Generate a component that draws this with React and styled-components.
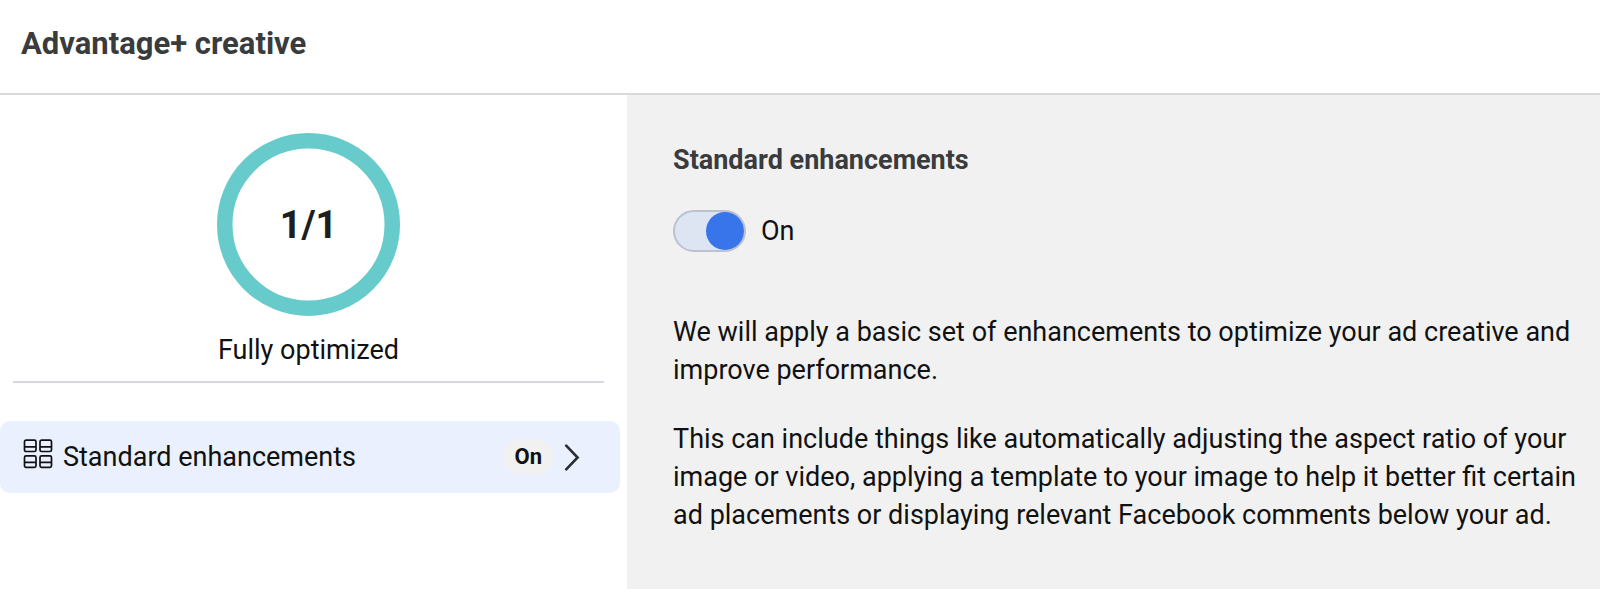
import React, { useState } from 'react'
import styled, { createGlobalStyle } from 'styled-components'

function App() {
    const [enabled, setEnabled] = useState(true)
    const status = enabled ? 'On' : 'Off'

    return (
        <>
            <GlobalStyle />
            <Page>
                <Header>
                    <Title>Advantage+ creative</Title>
                </Header>
                <Columns>
                    <Sidebar>
                        <Summary>
                            <Ring>
                                <ScoreRing />
                                <Score>{enabled ? '1/1' : '0/1'}</Score>
                            </Ring>
                            <SummaryLabel>Fully optimized</SummaryLabel>
                        </Summary>
                        <Item type='button'>
                            <GridIcon />
                            <ItemLabel>Standard enhancements</ItemLabel>
                            <Badge>{status}</Badge>
                            <ChevronIcon />
                        </Item>
                    </Sidebar>
                    <Details>
                        <DetailsTitle>Standard enhancements</DetailsTitle>
                        <ToggleRow>
                            <Toggle
                                id='enhancements'
                                type='checkbox'
                                role='switch'
                                checked={enabled}
                                onChange={(e) => setEnabled(e.target.checked)}
                            />
                            <label htmlFor='enhancements'>{status}</label>
                        </ToggleRow>
                        <Description>
                            <p>
                                We will apply a basic set of enhancements to optimize your ad creative and improve
                                performance.
                            </p>
                            <p>
                                This can include things like automatically adjusting the aspect ratio of your image or
                                video, applying a template to your image to help it better fit certain ad placements or
                                displaying relevant Facebook comments below your ad.
                            </p>
                        </Description>
                    </Details>
                </Columns>
            </Page>
        </>
    )
}

function ScoreRing() {
    return (
        <svg width='183' height='183' viewBox='0 0 183 183' fill='none' aria-hidden='true'>
            <circle cx='91.5' cy='91.5' r='83.75' stroke='#67cbcb' strokeWidth='15.5' />
        </svg>
    )
}

function GridIcon() {
    return (
        <svg width='30' height='36' viewBox='0 0 30 36' fill='none' stroke='#111' strokeWidth='1.7' aria-hidden='true'>
            <rect x='1.5' y='1.2' width='11.5' height='11.3' rx='1.6' />
            <rect x='17' y='1.2' width='11.5' height='11.3' rx='1.6' />
            <rect x='1.5' y='16.8' width='11.5' height='11.5' rx='1.6' />
            <rect x='17' y='16.8' width='11.5' height='11.5' rx='1.6' />
            <path d='M1.5 7.8h11.5M17 7.8h11.5M1.5 23.3h11.5M17 23.3h11.5' />
        </svg>
    )
}

function ChevronIcon() {
    return (
        <svg width='16' height='28' viewBox='0 0 16 28' fill='none' stroke='#2b2d30' strokeWidth='2.6' aria-hidden='true'>
            <path d='M2.2 2.7 13.6 14.5 2.2 26.3' strokeLinecap='round' />
        </svg>
    )
}

export default App

const GlobalStyle = createGlobalStyle`
    * {
        box-sizing: border-box;
    }

    body {
        margin: 0;
        background: #fff;
        color: #111;
        font-family: Roboto, 'Liberation Sans', sans-serif;
        font-size: 27px;
        line-height: 38px;
    }

    h1, h2, p {
        margin: 0;
    }
`

const Page = styled.main`
    display: flex;
    flex-direction: column;
    min-height: 100vh;
`

const Header = styled.header`
    padding: 25px 21px 30px;
    border-bottom: 2px solid #d9d9d9;
`

const Title = styled.h1`
    color: #3a3b3c;
    font-size: 31px;
    font-weight: 700;
    line-height: 38px;
`

const Columns = styled.div`
    display: grid;
    grid-template-columns: minmax(0, 29fr) minmax(0, 45fr);
    flex: 1;
`

const Sidebar = styled.div`
    display: flex;
    flex-direction: column;
    gap: 38px;
    padding: 38px 7px 38px 0;
`

const Summary = styled.section`
    display: flex;
    flex-direction: column;
    align-items: center;
    gap: 15px;
    margin: 0 16px 0 13px;
    padding-bottom: 12px;
    border-bottom: 2px solid #d8d8df;
`

const Ring = styled.div`
    display: grid;
    place-items: center;

    > * {
        grid-area: 1 / 1;
    }
`

const Score = styled.strong`
    color: #1c1e21;
    font-size: 38px;
    font-weight: 700;
`

const SummaryLabel = styled.p`
    color: #111;
`

const Item = styled.button`
    display: flex;
    align-items: center;
    gap: 10px;
    height: 72px;
    padding: 0 40px 0 23px;
    border: none;
    border-radius: 10px;
    background: #eaf0fd;
    color: #111;
    font: inherit;
    text-align: left;
    cursor: pointer;
`

const ItemLabel = styled.span`
    flex: 1;
`

const Badge = styled.span`
    padding: 0 12px;
    border-radius: 17px;
    background: #f1f1f1;
    font-size: 22px;
    font-weight: 700;
    line-height: 34px;
`

const Details = styled.section`
    padding: 46px 16px 46px 46px;
    background: #f1f1f1;
`

const DetailsTitle = styled.h2`
    color: #3a3b3c;
    font-size: 27px;
    font-weight: 700;
    line-height: 38px;
`

const ToggleRow = styled.div`
    display: flex;
    align-items: center;
    gap: 15px;
    margin: 31px 0 61px;
`

const Toggle = styled.input`
    appearance: none;
    display: flex;
    justify-content: flex-start;
    width: 73px;
    height: 42px;
    margin: 0;
    border: 2px solid #bcc1cf;
    border-radius: 21px;
    background: #dee5f2;
    cursor: pointer;

    &::before {
        content: '';
        width: 38px;
        height: 38px;
        border-radius: 50%;
        background: #8a8d91;
    }

    &:checked {
        justify-content: flex-end;
    }

    &:checked::before {
        background: #3875ea;
    }
`

const Description = styled.div`
    display: flex;
    flex-direction: column;
    gap: 31px;
`
